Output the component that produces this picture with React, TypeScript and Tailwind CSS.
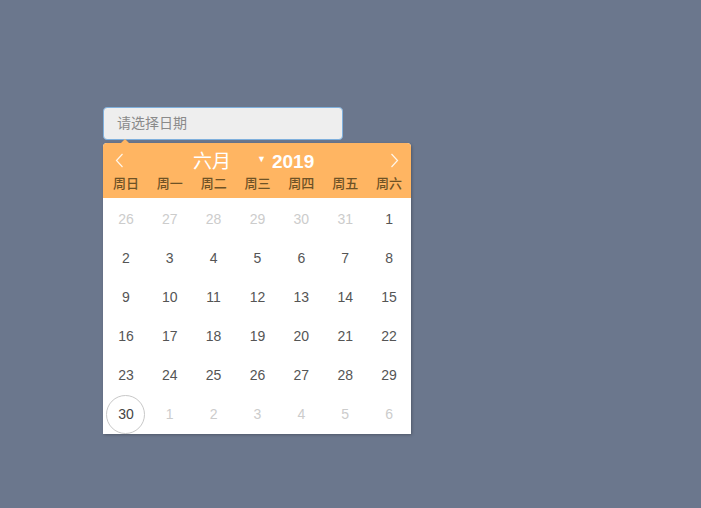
import React from 'react';

const weekdays = ['周日', '周一', '周二', '周三', '周四', '周五', '周六'];

type Day = { n: number; muted?: boolean; today?: boolean };

const days: Day[] = [
    ...[26, 27, 28, 29, 30, 31].map((n) => ({ n, muted: true })),
    ...Array.from({ length: 29 }, (_, i) => ({ n: i + 1 })),
    { n: 30, today: true },
    ...[1, 2, 3, 4, 5, 6].map((n) => ({ n, muted: true })),
];

const Chevron: React.FC<{ dir: 'left' | 'right' }> = ({ dir }) => (
    <svg width="9" height="15" viewBox="0 0 9 15" fill="none">
        <path
            d={dir === 'left' ? 'M7.5 1 L1.5 7.5 L7.5 14' : 'M1.5 1 L7.5 7.5 L1.5 14'}
            stroke="#fff6ea"
            strokeWidth="1.2"
        />
    </svg>
);

export default function App() {
    return (
        <div className="w-[701px] h-[508px] bg-[#6b778d] pt-[107px] pl-[103px]" style={{ fontFamily: '"Liberation Sans", "Noto Sans CJK SC", sans-serif' }}>
            {/* Input */}
            <div className="w-[240px] h-[33px] bg-[#eeeeee] border border-[#7fb0dd] rounded-[4px] flex items-center pl-[13px] text-[14px] text-[#8a8a8a]">
                请选择日期
            </div>

            {/* Calendar */}
            <div className="relative mt-[3px] w-[308px] bg-white rounded-t-[4px] shadow-[1px_1px_3px_rgba(0,0,0,0.25)]">
                <div className="absolute -top-[4px] left-[18px] w-0 h-0 border-l-[4px] border-r-[4px] border-b-[4px] border-l-transparent border-r-transparent border-b-[#ffb562]" />
                <div className="bg-[#ffb562] rounded-t-[4px] h-[55px] pt-[7px]">
                    <div className="relative h-[22px] flex items-center">
                        <div className="absolute left-[12px] top-[3px]">
                            <Chevron dir="left" />
                        </div>
                        <span className="ml-[90px] text-[19px] text-white leading-none">六月</span>
                        <span className="ml-[26px] text-[9px] text-white leading-none mt-[-4px]">▼</span>
                        <span className="ml-[6px] text-[19px] font-bold text-white leading-none">2019</span>
                        <div className="absolute right-[12px] top-[3px]">
                            <Chevron dir="right" />
                        </div>
                    </div>
                    <div className="grid grid-cols-7 mt-[3px] pl-[1px]">
                        {weekdays.map((w) => (
                            <div key={w} className="text-center text-[13px] text-[#6e5226] font-medium leading-[18px]">
                                {w}
                            </div>
                        ))}
                    </div>
                </div>
                <div className="grid grid-cols-7 pt-[2px] pl-[1px]">
                    {days.map((d, i) => (
                        <div key={i} className="h-[39px] flex items-center justify-center">
                            <div
                                className={
                                    'w-[39px] h-[39px] rounded-full flex items-center justify-center text-[14px] ' +
                                    (d.today ? 'border border-[#c8c8c8] text-[#444]' : d.muted ? 'text-[#cccccc]' : 'text-[#555555]')
                                }
                            >
                                {d.n}
                            </div>
                        </div>
                    ))}
                </div>
            </div>
        </div>
    );
}
